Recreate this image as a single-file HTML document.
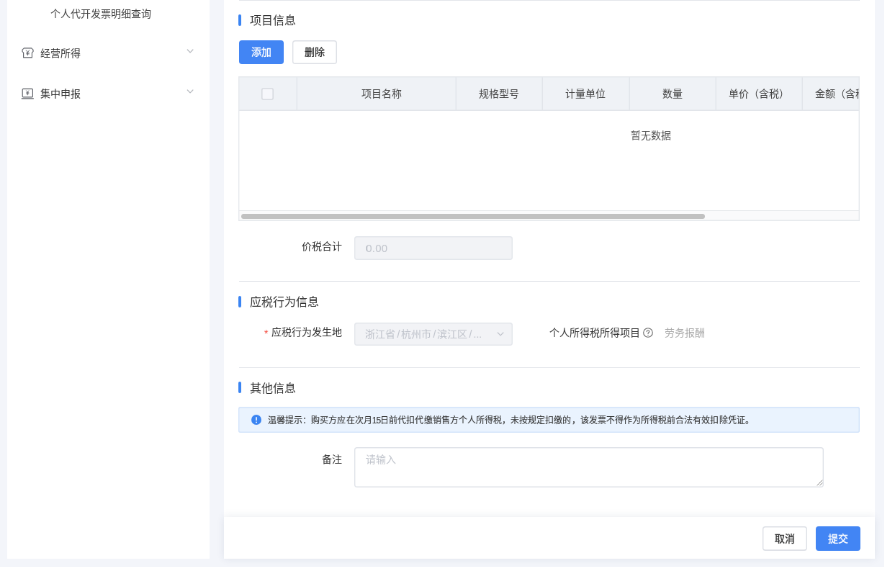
<!DOCTYPE html>
<html lang="zh-CN">
<head>
<meta charset="utf-8">
<title>个人代开发票</title>
<style>
*{box-sizing:border-box;margin:0;padding:0}
html,body{width:884px;height:567px;overflow:hidden}
body{background:#f3f5fa;font-family:"Liberation Sans",sans-serif;position:relative}
#stage{position:absolute;left:0;top:0;width:1228px;height:788px;transform:scale(0.72);transform-origin:0 0;will-change:transform;font-size:14px;color:#333}
.abs{position:absolute}
.side{left:9.7px;top:0;width:281.3px;height:776.2px;background:#fff}
.main{left:311.2px;top:0;width:903.9px;height:776.2px;background:#fff}
.t{position:absolute;white-space:nowrap;line-height:20px;height:20px;font-size:14px}
.hline{position:absolute;left:238.5px;width:621px;height:1px;background:#e8eaee}
.bar{position:absolute;left:331.4px;width:4px;height:15.6px;background:#3a84f2;border-radius:2px}
.title{font-size:16px;color:#333;left:347.2px;line-height:22px;height:22px}
.btn{position:absolute;height:34px;padding-top:0;-webkit-text-stroke:0.3px;width:62px;border-radius:4px;text-align:center;line-height:34px;font-size:14px;font-weight:500}
.btn.p{background:#4285f4;color:#fff}
.btn.d{background:#fff;box-shadow:inset 0 0 0 1.4px #dde0e6;color:#333}
.tbl{position:absolute;left:331.2px;top:105.6px;width:862.6px;height:201.4px;background:#fff;overflow:hidden}
.tbl>*{margin-left:1.3px;margin-top:1.3px}
.tbl:after{content:"";position:absolute;left:0;top:0;right:0;bottom:0;box-shadow:inset 0 0 0 1.4px #e6e9ed}
.th{position:absolute;top:0;padding-right:2.4px;height:47.4px;background:#eff2f6;box-shadow:inset -1.4px -1.4px 0 0 #e2e5ea;text-align:center;line-height:46.6px;font-size:14px;color:#444;white-space:nowrap;overflow:hidden}
.inp{position:absolute;left:491.7px;width:220.8px;height:32.8px;background:#f2f3f6;box-shadow:inset 0 0 0 1.4px #e4e7ec;border-radius:4px;color:#c0c4cc;font-size:14px;line-height:32.8px;padding-left:15.6px;white-space:nowrap;overflow:hidden}
.lbl{text-align:right;width:160px;left:315px}
.inp i{font-style:normal;margin:0 2.1px}
</style>
</head>
<body>
<div id="stage">

<div class="abs side"></div>
<div class="t" style="left:69.6px;top:8.6px;color:#444">个人代开发票明细查询</div>

<svg class="abs" style="left:29px;top:64px" width="19" height="18" viewBox="0 0 19 18" fill="none" stroke="#5c5f66" stroke-width="1.15" stroke-linejoin="round" stroke-linecap="round">
  <path d="M4.4 2.9h10.2l2.4 2.2v2.6l-1.6 1.5v6.6H3.6V9.2L2 7.7V5.1z"/>
  <path d="M7.4 5.9l2.1 2.5 2.1-2.5M9.5 8.4v4.2M7.7 9.4h3.6M7.7 10.9h3.6" stroke-width="0.95"/>
</svg>
<div class="t" style="left:55.5px;top:63.6px">经营所得</div>
<svg class="abs" style="left:258px;top:66.5px" width="12" height="8" viewBox="0 0 12 8" fill="none" stroke="#b5b8be" stroke-width="1.2" stroke-linecap="round" stroke-linejoin="round"><path d="M2.3 2l3.8 3.9 3.8-3.9"/></svg>

<svg class="abs" style="left:29px;top:121px" width="19" height="18" viewBox="0 0 19 18" fill="none" stroke="#5c5f66" stroke-width="1.2" stroke-linejoin="round" stroke-linecap="round">
  <rect x="2.2" y="2.3" width="14.2" height="11.6" rx="1.2"/>
  <path d="M1.2 15.8h16.2" stroke-width="1.3"/>
  <path d="M7.6 4.9l1.7 2 1.7-2M9.3 6.9v3.9M7.7 7.8h3.2M7.7 9.2h3.2" stroke-width="0.9"/>
</svg>
<div class="t" style="left:55.5px;top:120.1px">集中申报</div>
<svg class="abs" style="left:258px;top:123.2px" width="12" height="8" viewBox="0 0 12 8" fill="none" stroke="#b5b8be" stroke-width="1.2" stroke-linecap="round" stroke-linejoin="round"><path d="M2.3 2l3.8 3.9 3.8-3.9"/></svg>

<div class="abs main"></div>

<!-- 项目信息 -->
<div class="bar" style="top:20.3px"></div>
<div class="t title" style="top:18.4px">项目信息</div>

<div class="btn p" style="left:331.6px;top:55.6px;height:33.5px;line-height:33.5px">添加</div>
<div class="btn d" style="left:405.8px;top:55.6px;height:33.5px;line-height:33.5px">删除</div>

<div class="tbl">
  <div class="th" style="left:0;width:80.1px"><span style="position:absolute;left:30.8px;top:15.1px;width:16.8px;height:16.8px;box-shadow:inset 0 0 0 1.6px #d8dbe1;border-radius:3px;background:#f6f7fb"></span></div>
  <div class="th" style="left:80.6px;width:220.8px;padding-left:15px">项目名称</div>
  <div class="th" style="left:301.4px;width:120.4px">规格型号</div>
  <div class="th" style="left:421.8px;width:120.4px">计量单位</div>
  <div class="th" style="left:542.2px;width:120.4px">数量</div>
  <div class="th" style="left:662.6px;width:120.4px">单价（含税）</div>
  <div class="th" style="left:783px;width:120.4px">金额（含税）</div>
  <div class="t" style="left:543.8px;top:71.6px;color:#555">暂无数据</div>
  <div style="position:absolute;left:0;top:185.2px;width:100%;height:16px;background:#fafafb;border-top:1.3px solid #e6e8eb"></div>
  <div style="position:absolute;left:3px;top:189.7px;width:643.8px;height:7px;border-radius:3.5px;background:#c1c1c1"></div>
</div>

<div class="t lbl" style="top:332.4px">价税合计</div>
<div class="inp" style="top:328.2px;font-size:15px;padding-top:0.5px;letter-spacing:0.2px;padding-left:16.6px">0.00</div>


<!-- 应税行为信息 -->
<div class="bar" style="top:411px"></div>
<div class="t title" style="top:409.1px">应税行为信息</div>

<div class="t lbl" style="top:451.3px"><span style="color:#f5493d;margin-right:4.5px;font-size:15px;position:relative;top:2px">*</span>应税行为发生地</div>
<div class="inp" style="top:447.5px">浙江省<i>/</i>杭州市<i>/</i>滨江区<i>/</i>...</div>
<svg class="abs" style="left:689px;top:459.5px" width="12" height="8" viewBox="0 0 12 8" fill="none" stroke="#c0c4cc" stroke-width="1.2" stroke-linecap="round" stroke-linejoin="round"><path d="M2.3 2l3.8 3.9 3.8-3.9"/></svg>

<div class="t" style="left:763.2px;top:451.7px">个人所得税所得项目</div>
<svg class="abs" style="left:893px;top:454.8px" width="14" height="14" viewBox="0 0 14 14" fill="none" stroke="#666" stroke-width="1.1" stroke-linecap="round"><circle cx="7" cy="7" r="6.3"/><path d="M5.2 5.6c0-1.1.8-1.9 1.8-1.9s1.8.7 1.8 1.7c0 1.3-1.8 1.5-1.8 3"/><circle cx="7" cy="10.4" r="0.7" fill="#666" stroke="none"/></svg>
<div class="t" style="left:923px;top:451.7px;color:#aaa">劳务报酬</div>


<!-- 其他信息 -->
<div class="bar" style="top:530.4px"></div>
<div class="t title" style="top:528.8px">其他信息</div>

<div class="abs" style="left:331.2px;top:565.3px;width:862.6px;height:36.2px;background:#eaf3fe;box-shadow:inset 0 0 0 1.4px #d3e4fb;border-radius:3px"></div>
<svg class="abs" style="left:348.5px;top:576.3px" width="14" height="14" viewBox="0 0 14 14"><circle cx="7" cy="7" r="7" fill="#3a84f2"/><rect x="6.2" y="3.1" width="1.6" height="5.3" rx="0.8" fill="#fff"/><circle cx="7" cy="10.5" r="0.95" fill="#fff"/></svg>
<div class="t" style="left:372px;top:574.1px;font-size:12px;-webkit-text-stroke:0.1px;letter-spacing:0.06px">温馨提示：购买方应在次月<span style="letter-spacing:-0.94px">15</span>日前代扣代缴销售方个人所得税，未按规定扣缴的，该发票不得作为所得税前合法有效扣除凭证。</div>

<div class="t lbl" style="top:628.2px">备注</div>
<div class="abs" style="left:491.7px;top:620.8px;width:652px;height:55.8px;background:#fff;box-shadow:inset 0 0 0 1.4px #e0e3e9;border-radius:4px"></div>
<div class="t" style="left:508px;top:628.2px;color:#c0c4cc">请输入</div>
<svg class="abs" style="left:1133.6px;top:666px" width="9" height="9" viewBox="0 0 9 9" stroke="#777" stroke-width="0.9"><path d="M8.3 0.7L0.7 8.3M8.3 4.5L4.5 8.3"/></svg>

<!-- footer -->
<div class="abs" style="left:311.2px;top:718.2px;width:903.9px;height:58px;background:#fff;box-shadow:0 0 11px rgba(40,60,100,0.10)"></div>
<div class="btn d" style="left:1058.6px;top:730.9px">取消</div>
<div class="btn p" style="left:1132.6px;top:730.9px">提交</div>

</div>
<div class="hline" style="top:0"></div>
<div class="hline" style="top:281px"></div>
<div class="hline" style="top:367px"></div>
</body>
</html>
